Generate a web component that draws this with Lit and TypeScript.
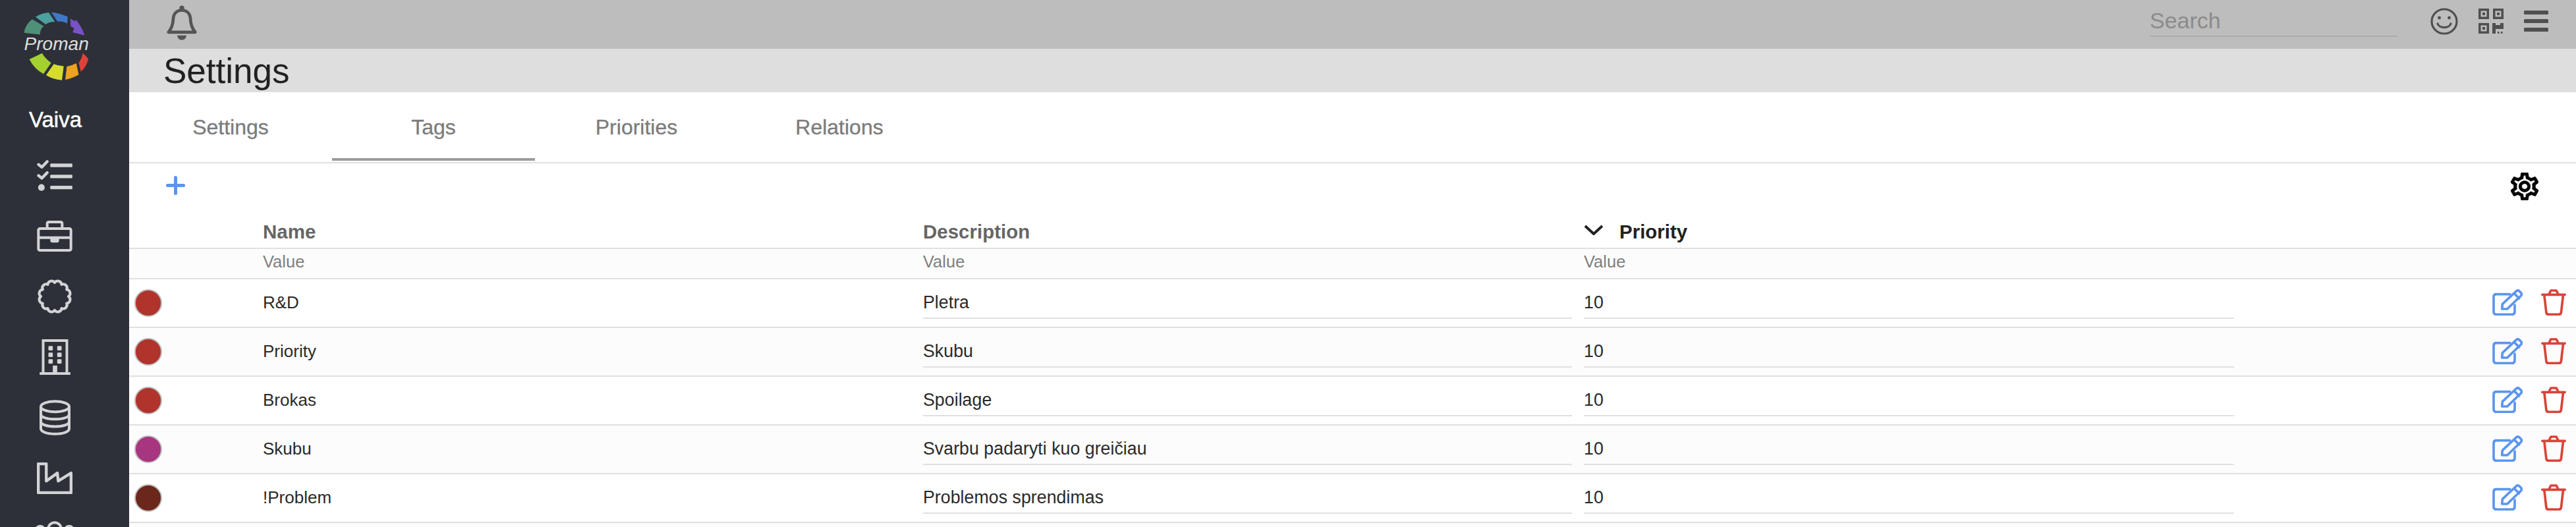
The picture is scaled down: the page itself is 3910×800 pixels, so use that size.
import { LitElement, html, css } from "lit";
import { customElement } from "lit/decorators.js";

const burstPath = (() => {
  const c = 80, R = 62, n = 12;
  let d = "";
  for (let k = 0; k <= n; k++) {
    const a = (k * 2 * Math.PI) / n - Math.PI / 2;
    const x = (c + R * Math.cos(a)).toFixed(2);
    const y = (c + R * Math.sin(a)).toFixed(2);
    d += k === 0 ? `M${x} ${y}` : ` A17 17 0 0 1 ${x} ${y}`;
  }
  return d + "Z";
})();

const logo = html`<svg class="logo" width="104" height="107" viewBox="100 50 310 320">
  <path fill="#4f9078" d="M110 148Q115 110 147 87L200 118Q183 130 182 156Z"/>
  <path fill="#4ba0a0" d="M162 76Q190 58 222 56L250 98Q225 98 208 110Z"/>
  <path fill="#3f78c8" d="M234 55Q272 58 308 75L306 105Q285 93 262 97Z"/>
  <path fill="#7a52c8" d="M320 84L342 96L345 88Q372 120 385 160L330 146L338 128L322 118Z"/>
  <text x="110" y="225" class="logo-text">Proman</text>
  <path fill="#a4d130" d="M134 268L192 241Q205 265 233 285L198 335Q155 310 134 268Z"/>
  <path fill="#d6dc2e" d="M210 340L245 290Q265 298 290 300L282 363Q240 360 210 340Z"/>
  <path fill="#eda31f" d="M297 361L304 301Q325 298 347 286L358 338Q330 355 297 361Z"/>
  <path fill="#e0413a" d="M368 325L358 285Q372 265 377 240L402 266Q395 300 368 325Z"/>
</svg>`;

const navIcons = [
  html`<svg width="54" height="47" viewBox="0 0 160 140" fill="#d2d3d5">
    <rect x="60" y="16" width="100" height="16" rx="4"/><rect x="60" y="66" width="100" height="16" rx="4"/><rect x="60" y="116" width="100" height="16" rx="4"/>
    <path fill="none" stroke="#d2d3d5" stroke-width="13" stroke-linecap="round" stroke-linejoin="round" d="M7 20L22 32L46 7M7 70L22 82L46 57"/>
    <circle cx="20" cy="124" r="15"/></svg>`,
  html`<svg width="54" height="47" viewBox="0 0 160 141" fill="none" stroke="#d2d3d5" stroke-width="12" stroke-linejoin="round">
    <rect x="6" y="36" width="148" height="99" rx="7"/><path d="M46 30V14Q46 6 54 6H106Q114 6 114 14V30"/><path d="M4 77H156"/>
    <path fill="#d2d3d5" stroke="none" d="M60 77H100V90Q100 100 90 100H70Q60 100 60 90Z"/></svg>`,
  html`<svg width="54" height="54" viewBox="0 0 160 160" fill="none" stroke="#d2d3d5" stroke-width="12" stroke-linejoin="round"><path d=${burstPath}/></svg>`,
  html`<svg width="47" height="54" viewBox="0 0 140 162" fill="#d2d3d5">
    <path fill="none" stroke="#d2d3d5" stroke-width="12" d="M16 156V6H124V156M0 156H140"/>
    <rect x="40" y="31" width="20" height="20" rx="4"/><rect x="80" y="31" width="20" height="20" rx="4"/>
    <rect x="40" y="61" width="20" height="20" rx="4"/><rect x="80" y="61" width="20" height="20" rx="4"/>
    <rect x="40" y="91" width="20" height="20" rx="4"/><rect x="80" y="91" width="20" height="20" rx="4"/>
    <rect x="60" y="120" width="20" height="32"/></svg>`,
  html`<svg width="47" height="54" viewBox="0 0 140 160" fill="none" stroke="#d2d3d5" stroke-width="12">
    <ellipse cx="70" cy="30" rx="64" ry="24"/><path d="M6 30V130C6 145 36 154 70 154C104 154 134 145 134 130V30"/>
    <path d="M6 64C6 79 36 87 70 87C104 87 134 79 134 64M6 98C6 112 36 120 70 120C104 120 134 112 134 98"/></svg>`,
  html`<svg width="54" height="48" viewBox="0 0 160 143" fill="none" stroke="#d2d3d5" stroke-width="13" stroke-linejoin="round">
    <path d="M6 6H42V84L92 48L96 84L154 48V137H6Z"/></svg>`,
  html`<svg width="60" height="54" viewBox="0 0 180 160" fill="none" stroke="#d2d3d5" stroke-width="12">
    <circle cx="90" cy="36" r="30"/><circle cx="24" cy="40" r="18"/><circle cx="156" cy="40" r="18"/>
    <path d="M40 150V110Q40 86 66 86H114Q140 86 140 110V150"/></svg>`,
];

const bell = html`<svg class="bell" width="46" height="53" viewBox="0 0 138 158" fill="none" stroke="#555" stroke-width="14" stroke-linejoin="round">
  <circle cx="69" cy="12" r="11" fill="#555" stroke="none"/>
  <path d="M8 122Q28 100 30 60C32 35 48 22 69 22C90 22 106 35 108 60Q110 100 130 122Z"/>
  <path fill="#555" stroke="none" d="M48 137H90A21 21 0 0 1 48 137Z"/></svg>`;

const smile = html`<svg width="42" height="41" viewBox="0 0 42 41" fill="none" stroke="#4f4f4f" stroke-width="3.2">
  <ellipse cx="21" cy="20.5" rx="19" ry="18.5"/><circle cx="13.5" cy="15" r="2.4" fill="#4f4f4f" stroke="none"/><circle cx="28.5" cy="15" r="2.4" fill="#4f4f4f" stroke="none"/>
  <path d="M11 24C14 31.5 28 31.5 31 24" stroke-linecap="round"/></svg>`;

const qr = html`<svg width="38" height="38" viewBox="0 0 38 38" fill="#4f4f4f">
  <path fill-rule="evenodd" d="M0 0H16V16H0ZM3.5 3.5V12.5H12.5V3.5ZM6 6H10V10H6ZM22 0H38V16H22ZM25.5 3.5V12.5H34.5V3.5ZM28 6H32V10H28ZM0 22H16V38H0ZM3.5 25.5V34.5H12.5V25.5ZM6 28H10V32H6Z"/>
  <path d="M21 22H26V25H33V22H38V31H26V38H21Z"/><rect x="29" y="35" width="2.5" height="3"/><rect x="34" y="35" width="2.5" height="3"/></svg>`;

const hamburger = html`<svg width="37" height="32" viewBox="0 0 37 32" fill="#4f4f4f">
  <rect y="0" width="37" height="6" rx="1.5"/><rect y="13" width="37" height="6" rx="1.5"/><rect y="26" width="37" height="6" rx="1.5"/></svg>`;

const plus = html`<svg width="29" height="29" viewBox="0 0 29 29" stroke="#5b95f0" stroke-width="5" stroke-linecap="round"><path d="M14.5 2.5V26.5M2.5 14.5H26.5"/></svg>`;

const gear = html`<svg width="42" height="42" viewBox="2.4 2 19.2 20" preserveAspectRatio="none" fill="#000" stroke="#000" stroke-width=".3"><path d="M19.43 12.98c.04-.32.07-.64.07-.98 0-.34-.03-.66-.07-.98l2.11-1.65c.19-.15.24-.42.12-.64l-2-3.46c-.09-.16-.26-.25-.44-.25-.06 0-.12.01-.17.03l-2.49 1c-.52-.4-1.08-.73-1.69-.98l-.38-2.65C14.46 2.18 14.25 2 14 2h-4c-.25 0-.46.18-.49.42l-.38 2.65c-.61.25-1.17.59-1.69.98l-2.49-1c-.06-.02-.12-.03-.18-.03-.17 0-.34.09-.43.25l-2 3.46c-.13.22-.07.49.12.64l2.11 1.65c-.04.32-.07.65-.07.98 0 .33.03.66.07.98l-2.11 1.65c-.19.15-.24.42-.12.64l2 3.46c.09.16.26.25.44.25.06 0 .12-.01.17-.03l2.49-1c.52.4 1.08.73 1.69.98l.38 2.65c.03.24.24.42.49.42h4c.25 0 .46-.18.49-.42l.38-2.65c.61-.25 1.17-.59 1.69-.98l2.49 1c.06.02.12.03.18.03.17 0 .34-.09.43-.25l2-3.46c.12-.22.07-.49-.12-.64l-2.11-1.65zm-1.98-1.71c.04.31.05.52.05.73 0 .21-.02.43-.05.73l-.14 1.13.89.7 1.08.84-.7 1.21-1.27-.51-1.04-.42-.9.68c-.43.32-.84.56-1.25.73l-1.06.43-.16 1.13-.2 1.35h-1.4l-.19-1.35-.16-1.13-1.06-.43c-.43-.18-.83-.41-1.23-.71l-.91-.7-1.06.43-1.27.51-.7-1.21 1.08-.84.89-.7-.14-1.13c-.03-.31-.05-.54-.05-.74s.02-.43.05-.73l.14-1.13-.89-.7-1.08-.84.7-1.21 1.27.51 1.04.42.9-.68c.43-.32.84-.56 1.25-.73l1.06-.43.16-1.13.2-1.35h1.39l.19 1.35.16 1.13 1.06.43c.43.18.83.41 1.23.71l.91.7 1.06-.43 1.27-.51.7 1.21-1.07.85-.89.7.14 1.13zM12 8c-2.21 0-4 1.79-4 4s1.79 4 4 4 4-1.79 4-4-1.79-4-4-4zm0 6c-1.1 0-2-.9-2-2s.9-2 2-2 2 .9 2 2-.9 2-2 2z"/></svg>`;

const chevron = html`<svg width="30" height="16" viewBox="0 0 30 16" fill="none" stroke="#222" stroke-width="4"><path d="M2 2L15 14L28 2"/></svg>`;

const edit = html`<svg width="46" height="40" viewBox="0 0 138 120" fill="none" stroke="#5b95f0" stroke-width="11" stroke-linejoin="round" stroke-linecap="round">
  <path d="M80 23H18Q6 23 6 35V103Q6 115 18 115H90Q102 115 102 103V72"/>
  <path d="M44 90L46 68L110 8Q116 3 122 8L132 18Q136 24 130 30L68 90Z"/><path d="M100 20L122 42"/></svg>`;

const trash = html`<svg width="38" height="40" viewBox="0 0 113 120" fill="none" stroke="#d9443a" stroke-width="11" stroke-linejoin="round" stroke-linecap="round">
  <path d="M5 25H108"/><path d="M36 22L44 6H69L77 22"/><path d="M14 27L23 105Q24 115 34 115H80Q90 115 91 105L100 27"/></svg>`;

const rows = [
  { name: "R&D", desc: "Pletra", color: "#b0332c" },
  { name: "Priority", desc: "Skubu", color: "#b0332c" },
  { name: "Brokas", desc: "Spoilage", color: "#b0332c" },
  { name: "Skubu", desc: "Svarbu padaryti kuo greičiau", color: "#a8357f" },
  { name: "!Problem", desc: "Problemos sprendimas", color: "#6b271b" },
];

const tabs = ["Settings", "Tags", "Priorities", "Relations"];

@customElement("app-root")
export class AppRoot extends LitElement {
  static styles = css`
    :host { display: flex; width: 3910px; height: 800px; overflow: hidden; font-family: "Liberation Sans", Arial, sans-serif; background: #fff; }
    svg { display: block; flex: none; }
    .sidebar { width: 196px; flex: none; background: #2d3038; display: flex; flex-direction: column; overflow: hidden; height: 800px; }
    .logo-block { height: 130px; box-sizing: border-box; padding: 17px 0 0 33px; flex: none; }
    .logo-text { font-family: "Liberation Sans", Arial, sans-serif; font-style: italic; font-size: 84px; fill: #dedede; }
    .user { height: 90px; box-sizing: border-box; padding: 12px 28px 0 0; flex: none; text-align: center; font-size: 33px; color: #fff; -webkit-text-stroke: .5px #fff; line-height: 80px; }
    .nav { flex: none; height: 92px; box-sizing: border-box; padding-right: 30px; display: flex; align-items: center; justify-content: center; }
    .main { flex: 1; min-width: 0; display: flex; flex-direction: column; }
    .topbar { height: 74px; flex: none; background: #bdbdbd; display: flex; align-items: center; box-sizing: border-box; padding: 0 42px 10px 57px; }
    .bell { margin-top: 5px; }
    .spacer { flex: 1; }
    .search { width: 376px; margin: 4px 50px 0 0; border-bottom: 2px solid #adadad; padding-bottom: 4px; font-size: 34px; line-height: 38px; color: #8b8b8b; }
    .top-icons { display: flex; align-items: center; gap: 31px; }
    .title { height: 66px; box-sizing: border-box; padding: 1px 0 0 52px; flex: none; background: #dedede; line-height: 66px; font-size: 53px; color: #212121; }
    .tabs { display: flex; height: 108px; flex: none; border-bottom: 2px solid #e0e0e0; box-sizing: border-box; }
    .tab { width: 308px; height: 104px; box-sizing: border-box; display: flex; align-items: center; justify-content: center; padding-top: 2px; font-size: 32px; color: #7b7b7b; -webkit-text-stroke: .3px #7b7b7b; }
    .tab.active { border-bottom: 4px solid #9b9b9b; padding-top: 6px; }
    .toolbar { height: 82px; flex: none; display: flex; justify-content: space-between; box-sizing: border-box; padding: 19px 57px 0 56px; }
    .gear { margin-top: -5px; }
    .grid { display: grid; grid-template-columns: 203px 1002px 1003px 1005px 1fr; box-sizing: border-box; border-bottom: 2px solid #e0e0e0; }
    .head { height: 48px; align-items: center; padding-bottom: 2px; font-size: 29.5px; font-weight: bold; color: #666; }
    .sorted { display: flex; align-items: center; gap: 24px; color: #222; }
    .sorted svg { margin-bottom: 6px; }
    .filter { height: 46px; align-items: center; padding-bottom: 5px; background: #fcfcfc; font-size: 25.5px; color: #7f7f7f; }
    .row { height: 74px; font-size: 26px; color: #2a2a2a; }
    .row.alt { background: #fcfcfc; }
    .swatch-cell { display: flex; align-items: center; padding-left: 8px; }
    .swatch { width: 42px; height: 42px; border-radius: 50%; border: 2px solid #bdbdbd; box-sizing: border-box; }
    .field { height: 60px; box-sizing: border-box; display: flex; align-items: flex-end; padding-bottom: 7px; line-height: 32px; border-bottom: 2px solid transparent; }
    .field.line { border-bottom-color: #e0e0e0; margin-right: 18px; font-size: 26.8px; }
    .actions { display: flex; align-items: center; justify-content: flex-end; gap: 28px; padding-right: 15px; margin-bottom: 3px; }
    .tail { flex: 1; background: #fcfcfc; }
  `;

  render() {
    return html`
      <aside class="sidebar">
        <div class="logo-block">${logo}</div>
        <div class="user">Vaiva</div>
        ${navIcons.map((i) => html`<div class="nav">${i}</div>`)}
      </aside>
      <div class="main">
        <header class="topbar">
          ${bell}
          <div class="spacer"></div>
          <div class="search">Search</div>
          <div class="top-icons">${smile}${qr}${hamburger}</div>
        </header>
        <div class="title">Settings</div>
        <nav class="tabs">
          ${tabs.map((t) => html`<div class="tab ${t === "Tags" ? "active" : ""}">${t}</div>`)}
        </nav>
        <div class="toolbar">${plus}<div class="gear">${gear}</div></div>
        <div class="grid head">
          <div></div><div>Name</div><div>Description</div>
          <div class="sorted">${chevron}<span>Priority</span></div><div></div>
        </div>
        <div class="grid filter">
          <div></div><div>Value</div><div>Value</div><div>Value</div><div></div>
        </div>
        ${rows.map((r, i) => html`
          <div class="grid row ${i % 2 ? "alt" : ""}">
            <div class="swatch-cell"><div class="swatch" style="background:${r.color}"></div></div>
            <div class="field">${r.name}</div>
            <div class="field line">${r.desc}</div>
            <div class="field line">10</div>
            <div class="actions">${edit}${trash}</div>
          </div>`)}
        <div class="tail"></div>
      </div>
    `;
  }
}
